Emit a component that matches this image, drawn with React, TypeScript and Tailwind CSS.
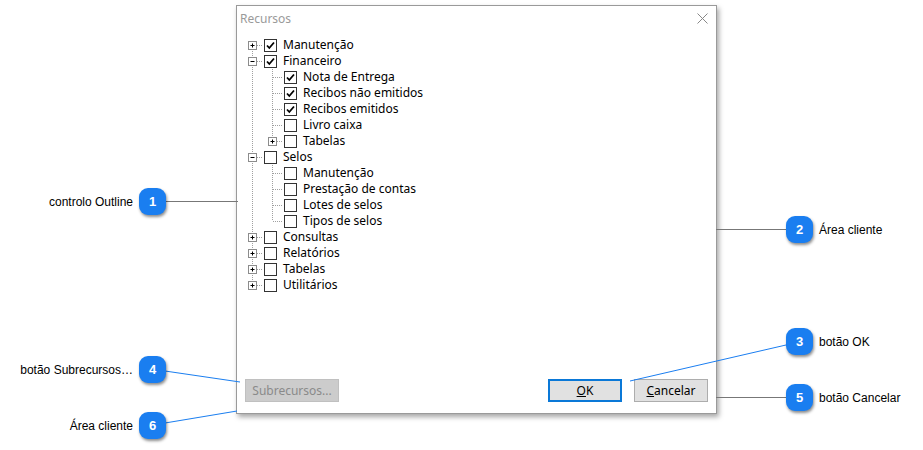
import React from "react";

type Row = { t: string; l: 1 | 2; e?: "+" | "-"; c?: boolean };
const rows: Row[] = [
  { t: "Manutenção", l: 1, e: "+", c: true },
  { t: "Financeiro", l: 1, e: "-", c: true },
  { t: "Nota de Entrega", l: 2, c: true },
  { t: "Recibos não emitidos", l: 2, c: true },
  { t: "Recibos emitidos", l: 2, c: true },
  { t: "Livro caixa", l: 2 },
  { t: "Tabelas", l: 2, e: "+" },
  { t: "Selos", l: 1, e: "-" },
  { t: "Manutenção", l: 2 },
  { t: "Prestação de contas", l: 2 },
  { t: "Lotes de selos", l: 2 },
  { t: "Tipos de selos", l: 2 },
  { t: "Consultas", l: 1, e: "+" },
  { t: "Relatórios", l: 1, e: "+" },
  { t: "Tabelas", l: 1, e: "+" },
  { t: "Utilitários", l: 1, e: "+" },
];

function Tree() {
  const dot = { stroke: "#a0a0a0", strokeDasharray: "1 1", strokeWidth: 1 };
  const lines: React.ReactNode[] = [];
  lines.push(<line key="v1" x1={8.5} y1={8} x2={8.5} y2={248} {...dot} />);
  lines.push(<line key="v2" x1={28.5} y1={24} x2={28.5} y2={104} {...dot} />);
  lines.push(<line key="v3" x1={28.5} y1={120} x2={28.5} y2={184} {...dot} />);
  rows.forEach((r, i) => {
    const y = i * 16 + 8.5;
    if (r.l === 1) lines.push(<line key={"h" + i} x1={9} y1={y} x2={19} y2={y} {...dot} />);
    else lines.push(<line key={"h" + i} x1={29} y1={y} x2={39} y2={y} {...dot} />);
    if (r.e) {
      const cx = r.l === 1 ? 8.5 : 28.5;
      lines.push(
        <g key={"e" + i}>
          <rect x={cx - 4} y={y - 4} width={8} height={8} fill="white" stroke="#8c8c8c" />
          <line x1={cx - 2} y1={y} x2={cx + 2} y2={y} stroke="#000" />
          {r.e === "+" && <line x1={cx} y1={y - 2} x2={cx} y2={y + 2} stroke="#000" />}
        </g>
      );
    }
  });
  return (
    <div className="relative">
      <svg className="absolute left-0 top-0" width={60} height={260}>{lines}</svg>
      {rows.map((r, i) => (
        <div key={i} className="relative flex h-[16px] items-center">
          <div className={r.l === 1 ? "w-[20px] shrink-0" : "w-[40px] shrink-0"} />
          <div className="flex h-[13px] w-[13px] shrink-0 items-center justify-center border border-[#333] bg-white">
            {r.c && (
              <svg width="11" height="11" viewBox="0 0 11 11">
                <path d="M2 5.5 L4.3 8 L9 2.5" fill="none" stroke="#000" strokeWidth="1.8" />
              </svg>
            )}
          </div>
          <span className="ml-[6px] text-[12px] leading-none text-black">{r.t}</span>
        </div>
      ))}
    </div>
  );
}

function Badge({ n, x, y }: { n: number; x: number; y: number }) {
  return (
    <div
      className="absolute flex h-[27px] w-[27px] items-center justify-center rounded-[9px] bg-[#1a7ef0] text-[13px] font-bold text-white shadow-[1px_2px_3px_rgba(0,0,0,0.45)]"
      style={{ left: x - 13, top: y - 13 }}
    >
      {n}
    </div>
  );
}

export default function App() {
  const font = { fontFamily: '"Noto Sans", "Liberation Sans", sans-serif' };
  return (
    <div className="relative h-[450px] w-[923px] overflow-hidden bg-white" style={{ fontFamily: '"Liberation Sans", Arial, sans-serif' }}>
      <div className="ml-[236px] mt-[5px] flex h-[409px] w-[481px] flex-col border border-[#9a9a9a] bg-white shadow-[2px_3px_5px_rgba(0,0,0,0.35)]" style={font}>
        <div className="flex h-[24px] items-center justify-between pl-[3px] pr-[8px] pt-[1px]">
          <span className="text-[12px] text-[#9a9a9a]">Recursos</span>
          <svg width="11" height="11" viewBox="0 0 11 11">
            <path d="M0.5 0.5 L10.5 10.5 M10.5 0.5 L0.5 10.5" stroke="#888" strokeWidth="1" />
          </svg>
        </div>
        <div className="ml-[7px] mt-[7px] flex-1">
          <Tree />
        </div>
        <div className="mb-[11px] flex items-center px-[8px]">
          <div className="flex h-[23px] w-[94px] items-center justify-center border border-[#c0c0c0] bg-[#cccccc] text-[12px] text-[#8a8a8a]">
            Subrecursos...
          </div>
          <div className="flex-1" />
          <div className="flex h-[23px] w-[74px] items-center justify-center border-2 border-[#0a78d7] bg-[#e1e1e1] text-[12px] text-black">
            <span><u>O</u>K</span>
          </div>
          <div className="ml-[12px] flex h-[23px] w-[74px] items-center justify-center border border-[#adadad] bg-[#e1e1e1] text-[12px] text-black">
            <span><u>C</u>ancelar</span>
          </div>
        </div>
      </div>

      <svg className="absolute left-0 top-0" width={923} height={450}>
        <line x1={165} y1={201.5} x2={238} y2={201.5} stroke="#777" />
        <line x1={786} y1={229.5} x2={716} y2={229.5} stroke="#777" />
        <line x1={786} y1={345} x2={630} y2={381} stroke="#1a7ef0" />
        <line x1={165} y1={371} x2={240} y2={382} stroke="#1a7ef0" />
        <line x1={786} y1={397.5} x2={716} y2={397.5} stroke="#777" />
        <line x1={165} y1={423} x2={237} y2={411} stroke="#1a7ef0" />
      </svg>

      <span className="absolute right-[790px] top-[193px] text-[12px] text-black">controlo Outline</span>
      <span className="absolute right-[790px] top-[361px] text-[12px] text-black">botão Subrecursos…</span>
      <span className="absolute right-[790px] top-[417px] text-[12px] text-black">Área cliente</span>
      <span className="absolute left-[819px] top-[221px] text-[12px] text-black">Área cliente</span>
      <span className="absolute left-[819px] top-[333px] text-[12px] text-black">botão OK</span>
      <span className="absolute left-[819px] top-[389px] text-[12px] text-black">botão Cancelar</span>

      <Badge n={1} x={152} y={201} />
      <Badge n={2} x={799} y={229} />
      <Badge n={3} x={799} y={341} />
      <Badge n={4} x={152} y={369} />
      <Badge n={5} x={799} y={397} />
      <Badge n={6} x={152} y={425} />
    </div>
  );
}
